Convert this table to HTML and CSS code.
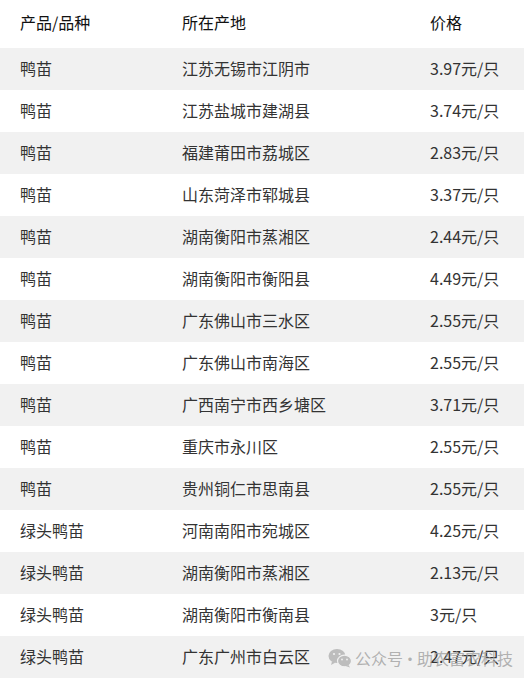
FILE: index.html
```html
<!DOCTYPE html>
<html lang="zh">
<head>
<meta charset="utf-8">
<link rel="stylesheet" href="styles.css">
</head>
<body>
<div class="page">
<table class="prices">
<thead>
<tr><th class="c1">产品/品种</th><th class="c2">所在产地</th><th class="c3">价格</th></tr>
</thead>
<tbody>
<tr><td>鸭苗</td><td>江苏无锡市江阴市</td><td>3.97元/只</td></tr>
<tr><td>鸭苗</td><td>江苏盐城市建湖县</td><td>3.74元/只</td></tr>
<tr><td>鸭苗</td><td>福建莆田市荔城区</td><td>2.83元/只</td></tr>
<tr><td>鸭苗</td><td>山东菏泽市郓城县</td><td>3.37元/只</td></tr>
<tr><td>鸭苗</td><td>湖南衡阳市蒸湘区</td><td>2.44元/只</td></tr>
<tr><td>鸭苗</td><td>湖南衡阳市衡阳县</td><td>4.49元/只</td></tr>
<tr><td>鸭苗</td><td>广东佛山市三水区</td><td>2.55元/只</td></tr>
<tr><td>鸭苗</td><td>广东佛山市南海区</td><td>2.55元/只</td></tr>
<tr><td>鸭苗</td><td>广西南宁市西乡塘区</td><td>3.71元/只</td></tr>
<tr><td>鸭苗</td><td>重庆市永川区</td><td>2.55元/只</td></tr>
<tr><td>鸭苗</td><td>贵州铜仁市思南县</td><td>2.55元/只</td></tr>
<tr><td>绿头鸭苗</td><td>河南南阳市宛城区</td><td>4.25元/只</td></tr>
<tr><td>绿头鸭苗</td><td>湖南衡阳市蒸湘区</td><td>2.13元/只</td></tr>
<tr><td>绿头鸭苗</td><td>湖南衡阳市衡南县</td><td>3元/只</td></tr>
<tr><td>绿头鸭苗</td><td>广东广州市白云区</td><td>2.47元/只</td></tr>
</tbody>
</table>
<div class="watermark">
<svg class="wx" width="24" height="20" viewBox="0 0 24 20">
<ellipse cx="9" cy="8" rx="8.5" ry="7" fill="#bdbdbd"/>
<path d="M4 13.5 L3 17 L7.5 14.5 Z" fill="#bdbdbd"/>
<ellipse cx="16.5" cy="13" rx="7" ry="5.8" fill="#bdbdbd" stroke="#f1f1f1" stroke-width="1.2"/>
<path d="M20.5 17 L22 19.5 L17.5 18 Z" fill="#bdbdbd"/>
<circle cx="6" cy="6" r="1.1" fill="#f1f1f1"/>
<circle cx="11.5" cy="6" r="1.1" fill="#f1f1f1"/>
<circle cx="14" cy="11.5" r="0.9" fill="#f1f1f1"/>
<circle cx="19" cy="11.5" r="0.9" fill="#f1f1f1"/>
</svg>
<span class="wm-text">公众号<span class="dot">·</span>助农富农科技</span>
</div>
</div>
</body>
</html>
```
FILE: styles.css
```css
html, body {
  margin: 0;
  padding: 0;
  background: #fff;
}
.page {
  position: relative;
  width: 524px;
  height: 678px;
  overflow: hidden;
  font-family: "Microsoft YaHei", "Noto Sans CJK SC", "Noto Sans", sans-serif;
  font-size: 16px;
}
.prices {
  width: 524px;
  border-collapse: collapse;
  table-layout: fixed;
}
.prices th, .prices td {
  padding: 0;
  text-align: left;
  font-weight: normal;
  white-space: nowrap;
}
.prices th {
  height: 44px;
  padding-bottom: 4px;
  color: #111;
}
.prices td {
  height: 42px;
  padding-bottom: 2px;
  box-sizing: border-box;
  color: #333;
}
.c1 { width: 162px; padding-left: 20px !important; }
.c2 { width: 248px; }
.prices td:first-child { padding-left: 20px; }
.prices tbody tr:nth-child(odd) { background: #f1f1f1; }
.watermark {
  position: absolute;
  left: 328px;
  top: 646px;
  display: flex;
  align-items: center;
  gap: 3px;
  white-space: nowrap;
  color: rgba(160,160,160,0.8);
  font-size: 16px;
  pointer-events: none;
}
.dot { margin: 0 -1px; }
.wx { display: block; }
```
